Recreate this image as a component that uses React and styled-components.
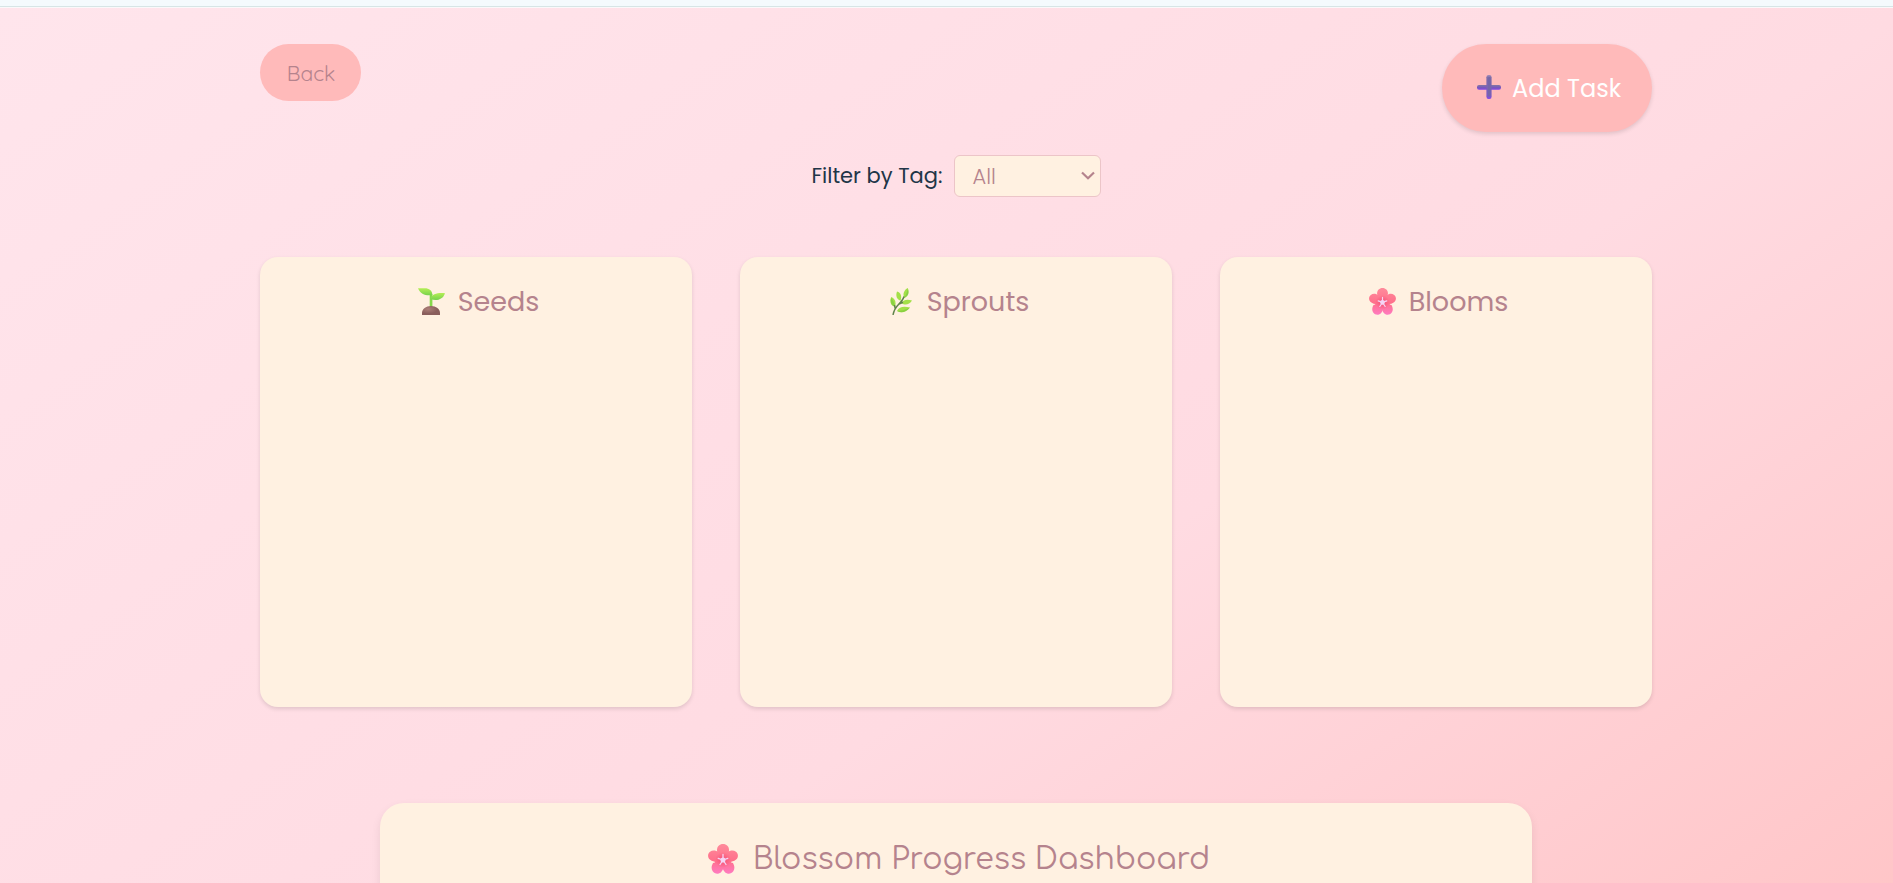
import React from "react";
import styled, { createGlobalStyle } from "styled-components";

const GlobalStyle = createGlobalStyle`
  *, *::before, *::after { box-sizing: border-box; }
  html, body, #root { height: 100%; }
  body {
    margin: 0;
    overflow: hidden;
    color: #213547;
    font-family: Poppins, Inter, "Liberation Sans", sans-serif;
  }
  button, select { font: inherit; }
`;

const Shell = styled.div`
  display: flex;
  flex-direction: column;
  height: 100%;
  overflow: hidden;
`;

const TopStrip = styled.div`
  flex: none;
  height: 8px;
  background: linear-gradient(#f4fafd 0 6px, #d7e5e6 6px 7px, #fbf8fa 7px 8px);
`;

const Page = styled.main`
  flex: none;
  height: 1300px;
  padding: 36px 241px 0 260px;
  background: linear-gradient(145deg, #ffe5ec 0%, #ffdbe2 51%, #ffbbbb 100%);
`;

const Toolbar = styled.header`
  display: flex;
  align-items: flex-start;
  justify-content: space-between;
`;

const BackButton = styled.button`
  width: 101px;
  height: 57px;
  padding: 0 0 0 1px;
  border: 0;
  border-radius: 29px;
  background: #ffbaba;
  color: #b5838d;
  font-family: Quicksand, Lato, sans-serif;
  font-size: 21px;
  font-weight: 400;
`;

const AddButton = styled.button`
  display: flex;
  align-items: center;
  width: 210px;
  height: 87.5px;
  padding: 1px 0 0 35px;
  gap: 11px;
  border: 0;
  border-radius: 44px;
  background: #ffbaba;
  color: #fff;
  font-size: 24px;
  font-weight: 400;
  box-shadow: 0 2px 4px rgba(0, 0, 0, 0.12);
`;

const FilterRow = styled.div`
  display: flex;
  align-items: center;
  justify-content: center;
  gap: 13px;
  margin-top: 23.5px;
  height: 42px;
  font-size: 21px;
`;

const FilterLabel = styled.label`
  width: 129px;
  padding-bottom: 2px;
  white-space: nowrap;
`;

const SelectBox = styled.button`
  display: flex;
  align-items: center;
  justify-content: space-between;
  width: 147px;
  height: 42px;
  padding: 1px 5px 0 18px;
  border: 1px solid #ecc5c8;
  border-radius: 6px;
  background: #fff1e1;
  color: #b5838d;
  font-weight: 300;
`;

const Board = styled.section`
  display: grid;
  grid-template-columns: repeat(3, 1fr);
  gap: 48px;
  margin-top: 60px;
`;

const Column = styled.article`
  height: 450px;
  padding-top: 27px;
  border-radius: 18px;
  background: #fff1e1;
  box-shadow: 0 2px 4px rgba(0, 0, 0, 0.12);
`;

const Heading = styled.h2`
  display: flex;
  align-items: center;
  justify-content: center;
  gap: ${(p) => p.$gap}px;
  height: 36px;
  margin: 0;
  padding-left: ${(p) => p.$indent || 0}px;
  color: #b5838d;
  font-size: 27px;
  font-weight: 400;
  line-height: 36px;
`;

const Dashboard = styled.section`
  height: 400px;
  margin: 96px 120px 0;
  padding-top: 37px;
  border-radius: 24px;
  background: #fff1e1;
  box-shadow: 0 4px 10px rgba(0, 0, 0, 0.08);
`;

const DashboardTitle = styled(Heading)`
  height: 40px;
  font-family: Comfortaa, Quicksand, Inter, sans-serif;
  font-size: 30px;
  line-height: 40px;
`;

const Icon = styled.svg`
  flex: none;
  display: block;
  margin-bottom: 2px;
`;

const Plus = () => (
  <Icon width="24" height="24" viewBox="0 0 24 24">
    <defs>
      <linearGradient id="plus" x1="0" y1="0" x2="0" y2="1">
        <stop offset="0" stopColor="#a08bbb" />
        <stop offset="0.12" stopColor="#7d6ba6" />
        <stop offset="0.85" stopColor="#7a5cc0" />
        <stop offset="1" stopColor="#8748e8" />
      </linearGradient>
      <linearGradient id="plusBar" x1="0" y1="0" x2="0" y2="1">
        <stop offset="0" stopColor="#8478a2" />
        <stop offset="0.55" stopColor="#7958bb" />
        <stop offset="1" stopColor="#8746e6" />
      </linearGradient>
    </defs>
    <rect x="0" y="9.9" width="24" height="4.8" rx="2" fill="url(#plusBar)" />
    <rect x="9.4" y="0" width="5.2" height="24" rx="2.2" fill="url(#plus)" />
    <rect x="11" y="2" width="2.4" height="19.5" rx="1.2" fill="#7566a8" />
  </Icon>
);

const Seedling = () => (
  <Icon width="27" height="27" viewBox="0 0 27 27">
    <defs>
      <linearGradient id="leaf" x1="0" y1="0" x2="0" y2="1">
        <stop offset="0" stopColor="#b4ee55" />
        <stop offset="1" stopColor="#76d24c" />
      </linearGradient>
      <radialGradient id="soil" cx="0.35" cy="0.35">
        <stop offset="0" stopColor="#ad7f78" />
        <stop offset="1" stopColor="#8a5e5c" />
      </radialGradient>
    </defs>
    <path d="M11.7 6h2.7v13h-2.7z" fill="#86d94b" />
    <path d="M0 .3H7C11 .3 14.3 2.5 14.3 7 9 8 2.5 7 0 .3Z" fill="url(#leaf)" />
    <path d="M12.5 11C14 5.5 20 4.6 27 5.2 25 11.5 18.5 13.4 12.5 11Z" fill="url(#leaf)" />
    <path d="M4 27v-2.2c0-3.8 4-6.8 9-6.8s9 3 9 6.8V27Z" fill="url(#soil)" />
  </Icon>
);

const Sprig = () => (
  <Icon width="22" height="27" viewBox="0 0 22 27">
    <g fill="#a3e048">
      <path d="M1.2 9C5 10.5 6.5 14 4.9 18.5 1 18-.8 13.5 1.2 9Z" />
      <path d="M7 3.5c4 1 5 5 3.5 9.2C6.500 11.500 5.500 7.500 7 3.500Z" />
      <path d="M17.800 0c1.500 4.500.5 8-3.600 10C12.500 6 14 2 17.800 0Z" />
      <path d="M11.500 15c2-3.500 6-4 10.500-2.500-2.500 4-7 5.300-10.500 2.500Z" />
      <path d="M7 23C9 18.500 14 18 20 19.500 16.500 24 11.500 25.500 7 23Z" />
    </g>
    <g fill="#79c83f" opacity=".6">
      <path d="M1.200 10c2 2 3.200 5 3.700 8.500C1.500 18 0 14 1.200 10Z" />
      <path d="M18 1c1.500 4 .200 7.500-3.800 9C16 7 17 4 18 1Z" />
      <path d="M7 23c4 0 8-1 13-3.500C16.500 24 11.500 25.500 7 23Z" />
    </g>
    <path d="M3 27C4 22 6 19 8.500 16.500S13 12 14 8.500M9 16l4-1.700M5.300 21l-.8-4" fill="none" stroke="#5f8349" strokeWidth="1.500" />
  </Icon>
);

const Blossom = ({ size, id }) => (
  <Icon width={size} height={size} viewBox="0 0 30 30">
    <defs>
      <linearGradient id={id} x1="0" y1="0" x2="0" y2="30" gradientUnits="userSpaceOnUse">
        <stop offset="0" stopColor="#ff8b9b" />
        <stop offset="0.55" stopColor="#ff708b" />
        <stop offset="1" stopColor="#ff7bc2" />
      </linearGradient>
      <radialGradient id={id + "c"}>
        <stop offset="0" stopColor="#ee4a72" />
        <stop offset="1" stopColor="#f9577b" stopOpacity="0" />
      </radialGradient>
    </defs>
    <g fill={`url(#${id})`}>
      <path d="M15 17C10.500 13 9 9.500 9 6 9 2.500 11.500 0 15 0s6 2.500 6 6c0 3.500-1.500 7-6 11Z" />
      <path d="M15 17C9 18.500 5 18 2.200 15.800-.8 13.500-.4 9.500 2 7.700c2.500-2 6-1.600 8.500.6Z" />
      <path d="M15 17c6 1.500 10 1 12.800-1.200 3-2.300 2.600-6.300.2-8.100-2.500-2-6-1.600-8.500.6Z" />
      <path d="M16 16C16.500 22 15.500 26 13 28.300c-2.700 2.400-6.500 1.700-8.300-1-1.900-2.800-1-5.800.3-8.300Z" />
      <path d="M14 16C13.500 22 14.500 26 17 28.300c2.700 2.400 6.500 1.700 8.300-1 1.900-2.800 1-5.800-.3-8.300Z" />
      <circle cx="15" cy="16" r="8.500" />
    </g>
    <circle cx="15" cy="16" r="8" fill={`url(#${id}c)`} />
    <g stroke="#f5d5f5" strokeWidth="1.300" strokeLinecap="round" fill="#f5d5f5">
      <path d="M15 16V10.500M15 16l-4.800-1.700M15 16l4.800-1.700M15 16l-3 4.500M15 16l3 4.500" />
      <circle cx="15" cy="16" r="1.900" />
    </g>
  </Icon>
);

const Chevron = () => (
  <Icon width="14" height="10" viewBox="0 0 14 10">
    <path d="M1 1.500 7 7.300l6-5.800" fill="none" stroke="#b5838d" strokeWidth="2.200" />
  </Icon>
);

export default function App() {
  return (
    <>
      <GlobalStyle />
      <Shell>
        <TopStrip />
        <Page>
          <Toolbar>
            <BackButton>Back</BackButton>
            <AddButton><Plus /><span>Add Task</span></AddButton>
          </Toolbar>
          <FilterRow>
            <FilterLabel>Filter by Tag:</FilterLabel>
            <SelectBox><span>All</span><Chevron /></SelectBox>
          </FilterRow>
          <Board>
            <Column><Heading $gap={13} $indent={5}><Seedling /><span>Seeds</span></Heading></Column>
            <Column><Heading $gap={15} $indent={7}><Sprig /><span>Sprouts</span></Heading></Column>
            <Column><Heading $gap={13} $indent={5}><Blossom size={27} id="bloom" /><span>Blooms</span></Heading></Column>
          </Board>
          <Dashboard>
            <DashboardTitle as="h1" $gap={15} $indent={6}>
              <Blossom size={30} id="dash" /><span>Blossom Progress Dashboard</span>
            </DashboardTitle>
          </Dashboard>
        </Page>
      </Shell>
    </>
  );
}
